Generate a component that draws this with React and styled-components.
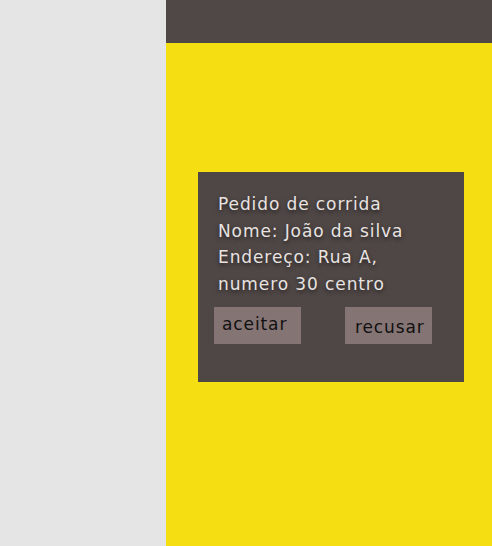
import React from 'react';
import styled, { createGlobalStyle } from 'styled-components';

const GlobalStyle = createGlobalStyle`
  html, body {
    margin: 0;
    padding: 0;
    height: 100%;
  }
  #root {
    height: 100%;
  }
`

function App() {
    return(
        <React.Fragment>
            <GlobalStyle/>
            <Page>
                <Sidebar></Sidebar>
                <Main>
                    <Header></Header>
                    <Content>
                        <Card>
                            <Info>
                                <Line>Pedido de corrida</Line>
                                <Line>Nome: João da silva</Line>
                                <Line>Endereço: Rua A,</Line>
                                <Line>numero 30 centro</Line>
                            </Info>
                            <Buttons>
                                <ActionBtn padLeft="8px" padTop="7px">aceitar</ActionBtn>
                                <ActionBtn padLeft="10px" padTop="10px">recusar</ActionBtn>
                            </Buttons>
                        </Card>
                    </Content>
                </Main>
            </Page>
        </React.Fragment>
    )
}

const Page = styled.div`
    display: flex;
    width: 492px;
    height: 546px;
    font-family: "DejaVu Sans", sans-serif;
`

const Sidebar = styled.div`
    width: 166px;
    flex-shrink: 0;
    background-color: #e5e5e5;
`

const Main = styled.div`
    flex: 1;
    display: flex;
    flex-direction: column;
`

const Header = styled.div`
    height: 43px;
    background-color: #504847;
`

const Content = styled.div`
    flex: 1;
    background-color: #f5de12;
    padding: 129px 0 0 32px;
`

const Card = styled.div`
    width: 266px;
    height: 210px;
    box-sizing: border-box;
    background-color: #4f4746;
    padding: 19px 16px 0 16px;
`

const Info = styled.div`
    padding-left: 4px;
    color: #e8e3e1;
    font-size: 17px;
    letter-spacing: 0.9px;
    line-height: 26.7px;
    text-shadow: 0 2px 4px rgba(0, 0, 0, 0.6);
`

const Line = styled.div`
    white-space: nowrap;
`

const Buttons = styled.div`
    display: flex;
    justify-content: space-between;
    margin-top: 9px;
    padding-right: 16px;
`

const ActionBtn = styled.div`
    width: 87px;
    height: 37px;
    box-sizing: border-box;
    background-color: #857474;
    color: #111;
    font-size: 17px;
    letter-spacing: 0.9px;
    padding-left: ${props => props.padLeft};
    padding-top: ${props => props.padTop};
`

export default App;
